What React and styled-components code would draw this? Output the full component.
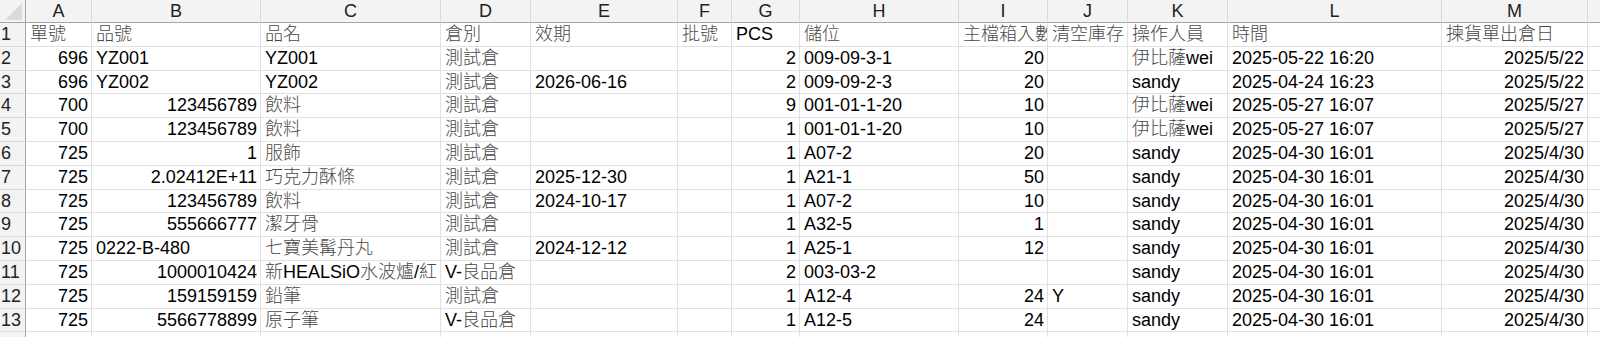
import React from 'react'
import styled, { createGlobalStyle } from 'styled-components'

const GlobalStyle = createGlobalStyle`
  html, body {
    margin: 0;
    padding: 0;
    background: #ffffff;
  }
  body {
    font-family: "Liberation Sans", "Noto Sans CJK TC", sans-serif;
  }
`

const columns = [
  { key: 'A', width: 66 },
  { key: 'B', width: 169 },
  { key: 'C', width: 180 },
  { key: 'D', width: 90 },
  { key: 'E', width: 147 },
  { key: 'F', width: 54 },
  { key: 'G', width: 68 },
  { key: 'H', width: 159 },
  { key: 'I', width: 89 },
  { key: 'J', width: 80 },
  { key: 'K', width: 100 },
  { key: 'L', width: 214 },
  { key: 'M', width: 146 },
  { key: 'N', width: 100 },
]

// r = right aligned (numbers), anything else is left aligned text
const rows = [
  ['單號', '品號', '品名', '倉別', '效期', '批號', 'PCS', '儲位', '主檔箱入數', '清空庫存', '操作人員', '時間', '揀貨單出倉日'],
  [{ r: '696' }, 'YZ001', 'YZ001', '測試倉', '', '', { r: '2' }, '009-09-3-1', { r: '20' }, '', '伊比薩wei', '2025-05-22 16:20', { r: '2025/5/22' }],
  [{ r: '696' }, 'YZ002', 'YZ002', '測試倉', '2026-06-16', '', { r: '2' }, '009-09-2-3', { r: '20' }, '', 'sandy', '2025-04-24 16:23', { r: '2025/5/22' }],
  [{ r: '700' }, { r: '123456789' }, '飲料', '測試倉', '', '', { r: '9' }, '001-01-1-20', { r: '10' }, '', '伊比薩wei', '2025-05-27 16:07', { r: '2025/5/27' }],
  [{ r: '700' }, { r: '123456789' }, '飲料', '測試倉', '', '', { r: '1' }, '001-01-1-20', { r: '10' }, '', '伊比薩wei', '2025-05-27 16:07', { r: '2025/5/27' }],
  [{ r: '725' }, { r: '1' }, '服飾', '測試倉', '', '', { r: '1' }, 'A07-2', { r: '20' }, '', 'sandy', '2025-04-30 16:01', { r: '2025/4/30' }],
  [{ r: '725' }, { r: '2.02412E+11' }, '巧克力酥條', '測試倉', '2025-12-30', '', { r: '1' }, 'A21-1', { r: '50' }, '', 'sandy', '2025-04-30 16:01', { r: '2025/4/30' }],
  [{ r: '725' }, { r: '123456789' }, '飲料', '測試倉', '2024-10-17', '', { r: '1' }, 'A07-2', { r: '10' }, '', 'sandy', '2025-04-30 16:01', { r: '2025/4/30' }],
  [{ r: '725' }, { r: '555666777' }, '潔牙骨', '測試倉', '', '', { r: '1' }, 'A32-5', { r: '1' }, '', 'sandy', '2025-04-30 16:01', { r: '2025/4/30' }],
  [{ r: '725' }, '0222-B-480', '七寶美髯丹丸', '測試倉', '2024-12-12', '', { r: '1' }, 'A25-1', { r: '12' }, '', 'sandy', '2025-04-30 16:01', { r: '2025/4/30' }],
  [{ r: '725' }, { r: '1000010424' }, '新HEALSiO水波爐/紅', 'V-良品倉', '', '', { r: '2' }, '003-03-2', '', '', 'sandy', '2025-04-30 16:01', { r: '2025/4/30' }],
  [{ r: '725' }, { r: '159159159' }, '鉛筆', '測試倉', '', '', { r: '1' }, 'A12-4', { r: '24' }, 'Y', 'sandy', '2025-04-30 16:01', { r: '2025/4/30' }],
  [{ r: '725' }, { r: '5566778899' }, '原子筆', 'V-良品倉', '', '', { r: '1' }, 'A12-5', { r: '24' }, '', 'sandy', '2025-04-30 16:01', { r: '2025/4/30' }],
]

// split a string into runs of Han characters and everything else,
// so the Han runs can be toned down like the thin Windows font
const hanRun = /([\u3400-\u9fff]+)/
const Text = ({ children }) => {
  if (!children) return null
  return children.split(hanRun).map((part, i) =>
    i % 2 === 1 ? <Han key={i}>{part}</Han> : part
  )
}

const App = () => {
  return (
    <>
      <GlobalStyle />
      <Sheet>
        <Grid $cols={columns.map(c => c.width + 'px').join(' ')}>
          <Corner>
            <CornerMark />
          </Corner>
          {columns.map(c => (
            <ColHead key={c.key}>{c.key}</ColHead>
          ))}
          {rows.map((row, i) => (
            <React.Fragment key={i}>
              <RowHead>{i + 1}</RowHead>
              {columns.map((c, j) => {
                const v = row[j]
                const right = v && typeof v === 'object'
                return (
                  <Cell key={c.key} $right={right}>
                    <Text>{right ? v.r : v}</Text>
                  </Cell>
                )
              })}
            </React.Fragment>
          ))}
          {/* row 14 peeks in under the last row, only its gridlines show */}
          <RowHead />
          {columns.map(c => (
            <Cell key={c.key} />
          ))}
        </Grid>
      </Sheet>
    </>
  )
}

const Sheet = styled.div`
  width: 1600px;
  height: 337px;
  overflow: hidden;
  background: #ffffff;
`

const Grid = styled.div`
  display: grid;
  grid-template-columns: 26px ${p => p.$cols};
  grid-template-rows: 23px repeat(14, 23.8px);
  font-size: 18px;
  color: #000000;
`

const Corner = styled.div`
  position: relative;
  background: #f3f3f3;
  border-right: 1px solid #a6a6a6;
  border-bottom: 1px solid #a6a6a6;
  box-sizing: border-box;
`

const CornerMark = styled.div`
  position: absolute;
  right: 3px;
  bottom: 2px;
  width: 17px;
  height: 17px;
  background: #dadada;
  clip-path: polygon(100% 0, 100% 100%, 0 100%);
`

const ColHead = styled.div`
  background: #f3f3f3;
  border-right: 1px solid #d8d8d8;
  border-bottom: 1px solid #a6a6a6;
  box-sizing: border-box;
  text-align: center;
  line-height: 23px;
  color: #222222;
  overflow: hidden;
  white-space: nowrap;
`

const RowHead = styled.div`
  background: #f3f3f3;
  border-right: 1px solid #a6a6a6;
  border-bottom: 1px solid #d8d8d8;
  box-sizing: border-box;
  padding-left: 1px;
  line-height: 23.8px;
  color: #222222;
  overflow: hidden;
  white-space: nowrap;
`

const Cell = styled.div`
  border-right: 1px solid #e1e1e1;
  border-bottom: 1px solid #e1e1e1;
  box-sizing: border-box;
  padding: 0 3px 0 4px;
  text-align: ${p => (p.$right ? 'right' : 'left')};
  line-height: 23.8px;
  overflow: hidden;
  white-space: nowrap;
`

const Han = styled.span`
  color: #4a4a4a;
  font-weight: 300;
`

export default App
